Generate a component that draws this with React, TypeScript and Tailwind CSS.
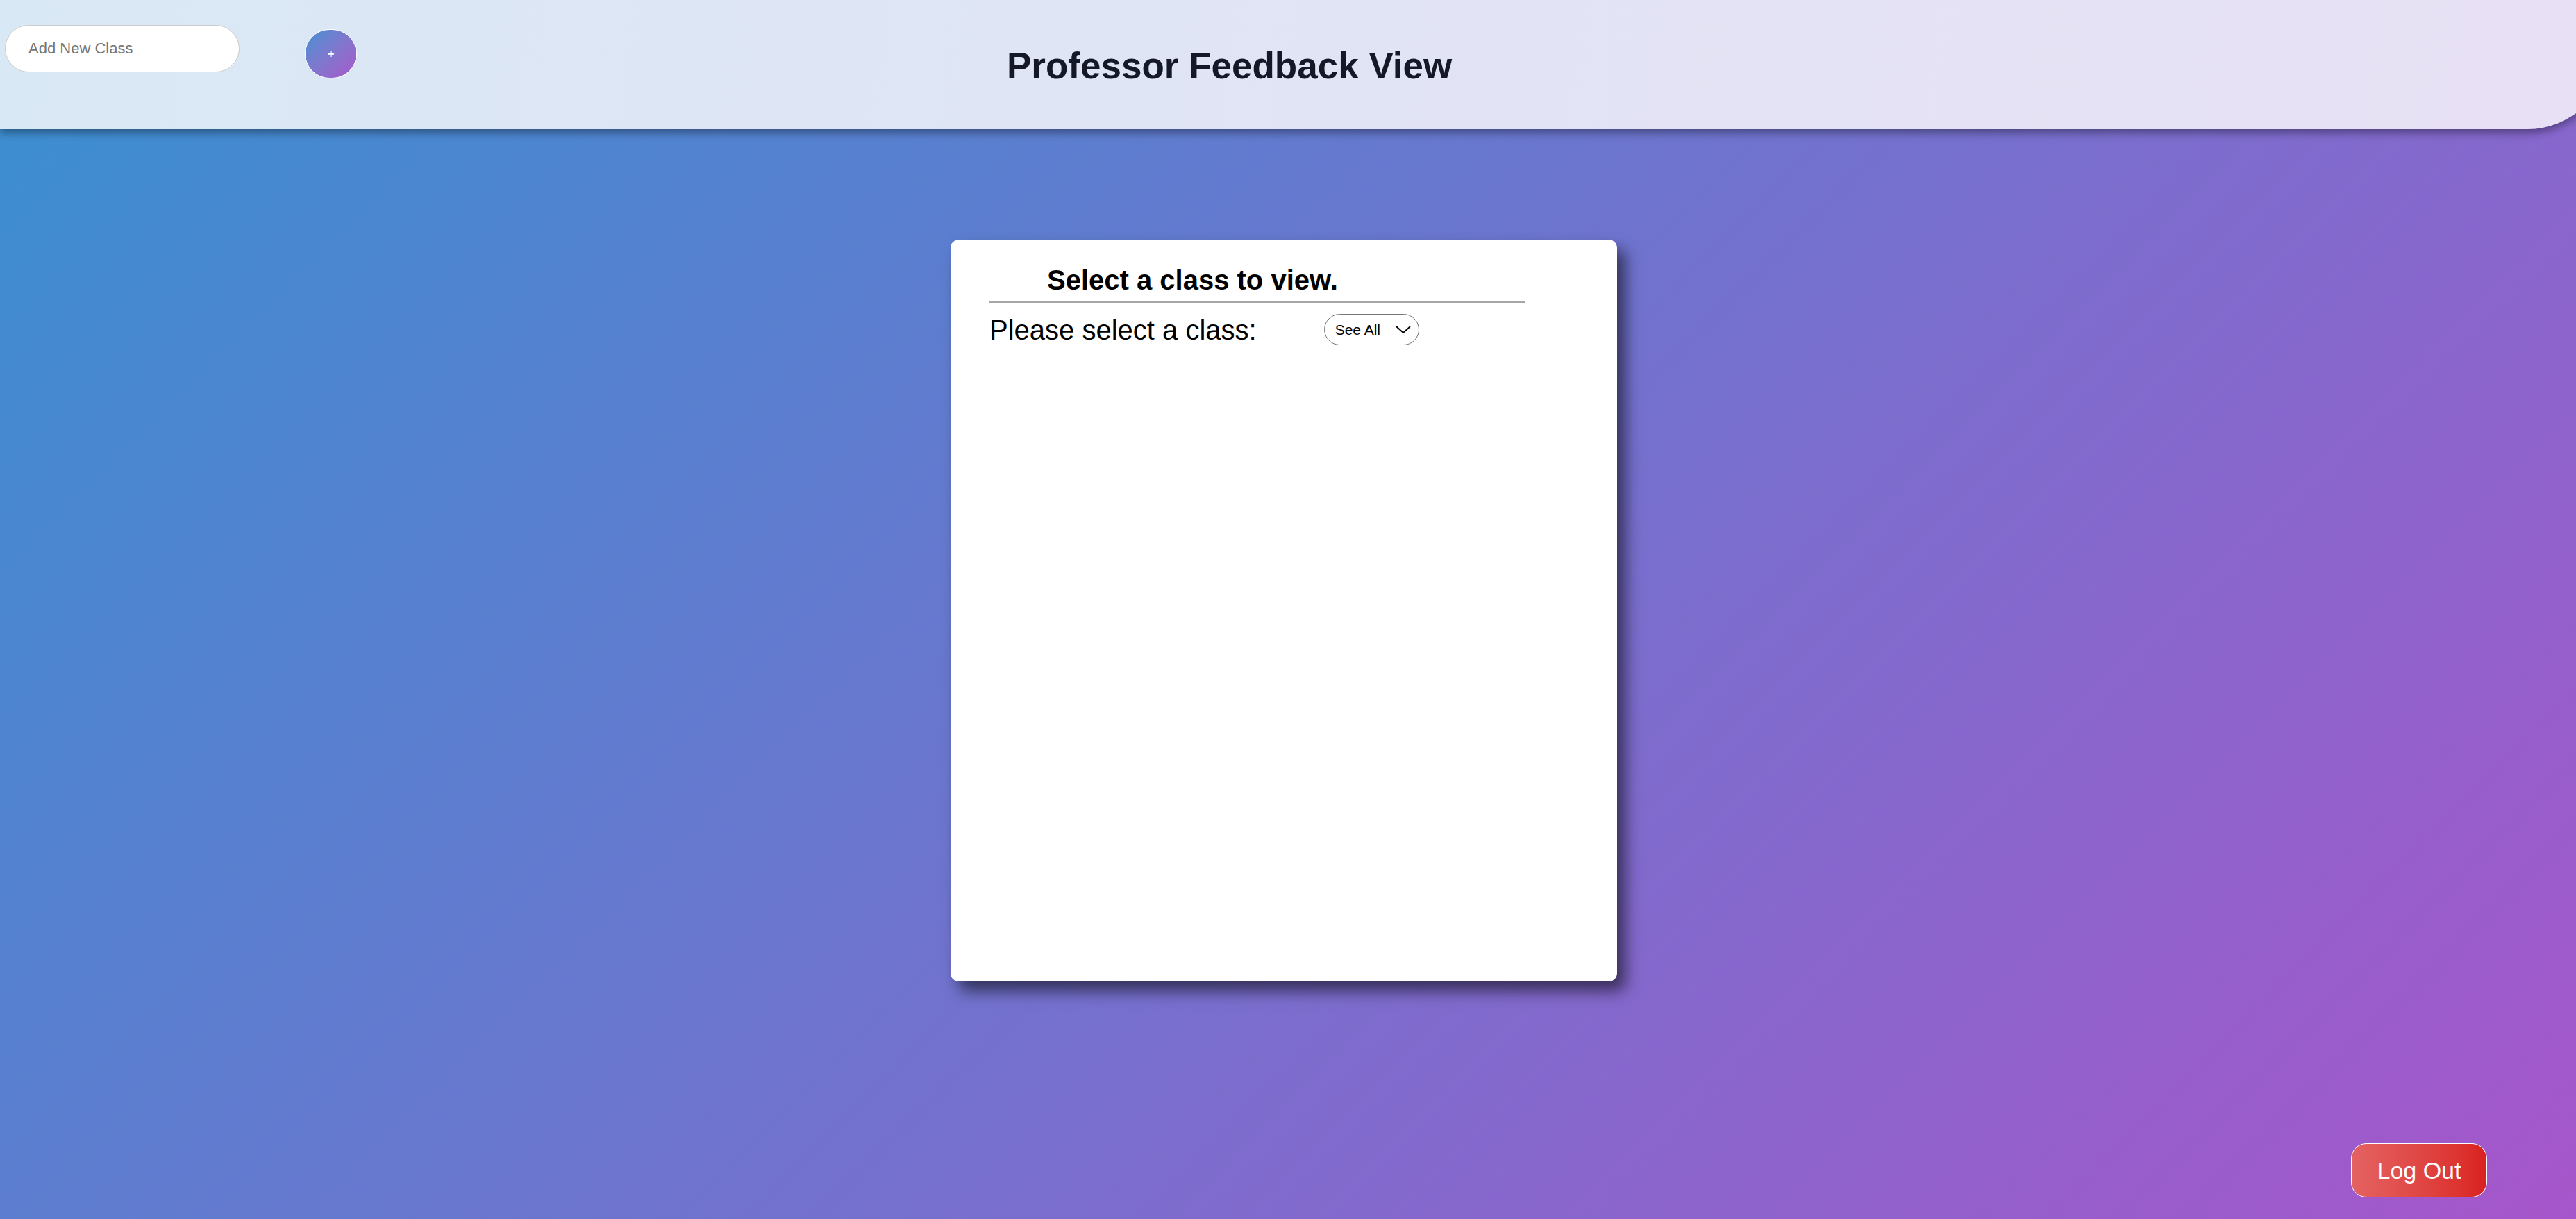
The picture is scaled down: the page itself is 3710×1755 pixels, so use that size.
import React from "react";

export default function App() {
  return (
    <div className="relative flex min-h-[1755px] w-full flex-col overflow-hidden bg-[linear-gradient(135deg,#3a90d2_0%,#a656ca_100%)] font-['Liberation_Sans',Arial,sans-serif]">
      <header className="flex h-[186px] w-[calc(100%+48px)] shrink-0 items-start rounded-br-[118px] bg-[linear-gradient(100deg,#d9e8f5_0%,#e8e0f4_100%)] shadow-[0_6px_12px_rgba(0,0,0,0.35)]">
        <input
          type="text"
          placeholder="Add New Class"
          className="ml-[7px] mt-[36px] h-[68px] w-[338px] rounded-full border border-[#cccccc] bg-white pl-[33px] text-[22px] text-[#333] outline-none placeholder:text-[#757575]"
        />
        <button className="ml-[94px] mt-[42px] flex h-[71px] w-[75px] items-center justify-center rounded-full border border-white bg-gradient-to-br from-[#3a90d2] to-[#a656ca] text-[17px] font-bold leading-none text-white">
          +
        </button>
        <h1 className="ml-[936px] self-center pt-[2px] text-[53px] font-bold leading-none text-[#141827]">
          Professor Feedback View
        </h1>
      </header>

      <main className="flex pt-[159px]">
        <section className="ml-[1369px] flex h-[1068px] w-[960px] flex-col rounded-[12px] bg-white pl-[56px] pt-[38px] shadow-[12px_14px_22px_rgba(0,0,0,0.55)]">
          <h2 className="ml-[83px] text-[40px] font-bold leading-none text-black">
            Select a class to view.
          </h2>
          <div className="mt-[11px] h-[2px] w-[771px] bg-[#a6a6a6]" />
          <div className="mt-[16px] flex items-center">
            <span className="text-[40px] leading-none text-black">Please select a class:</span>
            <div className="ml-[97px] flex h-[45px] w-[137px] items-center rounded-full border border-[#767676] bg-white pl-[15px] pr-[11px]">
              <span className="text-[21px] leading-none text-black">See All</span>
              <svg className="ml-auto" width="22" height="12" viewBox="0 0 22 12" fill="none">
                <path d="M1.5 1.5 L11 10 L20.5 1.5" stroke="#000" strokeWidth="1.8" strokeLinecap="round" strokeLinejoin="round" />
              </svg>
            </div>
          </div>
        </section>
      </main>

      <footer className="mt-auto flex justify-end pb-[31px] pr-[128px]">
        <button className="flex h-[78px] w-[196px] items-center justify-center rounded-[22px] border border-white bg-gradient-to-r from-[#e46262] to-[#da2020] text-[34px] leading-none text-white">
          Log Out
        </button>
      </footer>
    </div>
  );
}
